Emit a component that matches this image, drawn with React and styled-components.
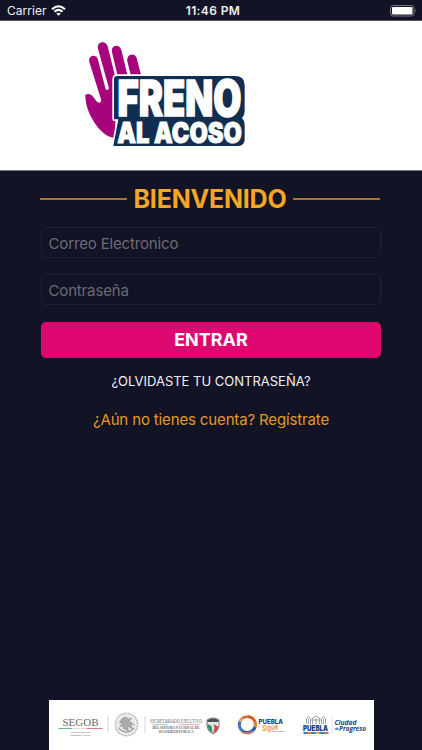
import React from "react";
import styled, { createGlobalStyle } from "styled-components";

const GlobalStyle = createGlobalStyle`
  * {
    box-sizing: border-box;
  }
  body {
    margin: 0;
    background: #131326;
    font-family: Inter, "Liberation Sans", sans-serif;
  }
`;

const Screen = styled.div`
  display: flex;
  flex-direction: column;
  width: 422px;
  height: 750px;
  overflow: hidden;
  background: #131326;
`;

const StatusBar = styled.div`
  display: grid;
  grid-template-columns: 1fr auto 1fr;
  align-items: center;
  height: 20px;
  flex: none;
  padding: 1px 5px 0 7px;
  color: #f1f1f5;
  font-size: 12px;
`;

const Carrier = styled.div`
  display: flex;
  align-items: center;
  gap: 4px;
  letter-spacing: 0.05px;
`;

const Clock = styled.div`
  font-weight: 600;
  letter-spacing: 0.4px;
  padding-left: 2px;
`;

const Battery = styled.svg`
  justify-self: end;
`;

const Header = styled.header`
  display: flex;
  flex: none;
  height: 151px;
  padding: 14px 0 0 80px;
  background: #fff;
  border-top: 1px solid #55556a;
  border-bottom: 1px solid #6f7c85;
`;

const Form = styled.main`
  display: flex;
  flex-direction: column;
  align-items: center;
  flex: 1;
  padding: 13px 41px 0;
`;

const Title = styled.h1`
  display: flex;
  align-items: center;
  align-self: stretch;
  gap: 6px;
  height: 30px;
  margin: 0 1px 13px -1px;
  color: #f6a623;
  font-size: 25px;
  font-weight: 700;
  letter-spacing: -0.2px;
  line-height: 30px;

  &::before,
  &::after {
    content: "";
    flex: 1;
    height: 2px;
    margin-top: -1px;
    background: #a8762a;
  }
`;

const Input = styled.input`
  width: 340px;
  height: 31px;
  margin-bottom: ${(props) => props.$gap};
  padding: 1px 6.5px 0;
  border: 1px solid #20203c;
  border-radius: 5px;
  background: transparent;
  color: #fff;
  font-family: inherit;
  font-size: 15px;
  letter-spacing: -0.15px;

  &::placeholder {
    color: #6b6b73;
    opacity: 1;
  }
`;

const Button = styled.button`
  width: 340px;
  height: 36px;
  padding: 0 0 1px;
  border: 0;
  border-radius: 5px;
  background: #de066f;
  color: #fff;
  font-family: inherit;
  font-size: 18px;
  font-weight: 700;
`;

const Link = styled.a`
  margin-top: ${(props) => props.$top};
  color: ${(props) => props.$color};
  font-size: ${(props) => props.$size};
  letter-spacing: ${(props) => props.$spacing || "0"};
  line-height: 20px;
  white-space: nowrap;
`;

const Footer = styled.footer`
  flex: none;
  width: 325px;
  height: 50px;
  margin-left: 48.5px;
  background: #fff;
`;

function Wifi() {
  return (
    <svg width="15" height="11" viewBox="0 0 15 11">
      <g fill="none" stroke="#fff" strokeWidth="2.1">
        <path d="M1 4.2Q7.5 -1.7 14 4.2" />
        <path d="M3.4 6.8Q7.5 3.1 11.6 6.8" />
      </g>
      <path d="M5.2 8.5Q7.5 6.8 9.8 8.5L7.5 10.8Z" fill="#fff" />
    </svg>
  );
}

function Logo() {
  const plate =
    "M118 126H470Q500 126 500 154V232Q500 244 492 252Q500 260 500 272V316Q500 336 480 336H106L121 256H108V136Q108 126 118 126Z";
  return (
    <svg width="170" height="118" viewBox="80 35 170 118">
      <g transform="translate(78 34) scale(.33333)">
        {/* hand */}
        <g fill="#a6037c">
          <path d="M22 187C20 179 33 178 40 183C48 189 52 200 59 205C65 209 71 204 69 196L34 84C29 64 55 58 60 77L82 162C85 172 94 169 92 160L60 44C55 23 83 17 89 37L112 130V313C85 309 65 290 50 267C34 242 23 218 22 187Z" />
          <path d="M102 54C98 33 124 28 130 48L149 126H119Z" />
          <path d="M148 82C144 61 170 53 176 72L190 126H159Z" />
        </g>
        {/* plate behind the name */}
        <path d={plate} fill="#fff" stroke="#fff" strokeWidth="10" strokeLinejoin="round" />
        <path d={plate} fill="#112d50" />
      </g>
      <g fill="#fff" stroke="#fff" fontFamily="Inter, sans-serif" fontWeight="900">
        <text x="117.6" y="115.7" fontSize="49" strokeWidth="1.5" textLength="123.8" lengthAdjust="spacingAndGlyphs">FRENO</text>
        <text x="117.2" y="143.1" fontSize="28" strokeWidth=".9" textLength="124.6" lengthAdjust="spacingAndGlyphs">AL ACOSO</text>
      </g>
    </svg>
  );
}

function Sponsors() {
  return (
    <svg width="325" height="50" viewBox="48.5 700 325 50">
      {/* Segob */}
      <text x="62" y="726" fontSize="10.5" fill="#66666a" fontFamily="Liberation Serif, serif" textLength="36" lengthAdjust="spacingAndGlyphs">SEGOB</text>
      <path d="M58 728.5H72" stroke="#6fb394" />
      <path d="M72 728.5H86" stroke="#ddd" />
      <path d="M86 728.5H102" stroke="#df7b86" />
      <g fontFamily="Liberation Serif, serif" fill="#66666a" fontSize="2.9" fontWeight="700">
        <text x="70" y="733" textLength="20" lengthAdjust="spacingAndGlyphs">SECRETARÍA DE</text>
        <text x="70" y="736.3" textLength="20" lengthAdjust="spacingAndGlyphs">GOBERNACIÓN</text>
      </g>
      <path d="M107.5 715V733M144.5 716V733" stroke="#c9c9cc" strokeWidth=".8" />

      {/* national seal */}
      <circle cx="126" cy="724.5" r="11" fill="none" stroke="#b3b3b3" strokeWidth="2" strokeDasharray="1 .6" />
      <circle cx="126" cy="724.5" r="8.7" fill="#efefef" stroke="#c6c6c6" strokeWidth=".6" />
      <path d="M119 723C121 717 125 716 128 719L131 718L129 721L134 725L130 724L132 729L127 726L128 731L122 728L124 725L119 727L122 723Z" fill="#aaa" stroke="#8f8f8f" strokeWidth=".6" />
      <path d="M118 728Q126 736 134 728" fill="none" stroke="#a5a5a5" strokeWidth="1.3" />

      {/* Secretariado */}
      <g fontFamily="Liberation Serif, serif" fill="#66666a">
        <text x="149.5" y="723.3" fontSize="5.3" textLength="52" lengthAdjust="spacingAndGlyphs">SECRETARIADO EJECUTIVO</text>
        <text x="152" y="728.5" fontSize="3.4" fontWeight="700" textLength="47" lengthAdjust="spacingAndGlyphs">DEL SISTEMA NACIONAL DE</text>
        <text x="158" y="732.8" fontSize="3.6" fontWeight="700" textLength="35" lengthAdjust="spacingAndGlyphs">SEGURIDAD PÚBLICA</text>
      </g>
      <path d="M152 724.7H167" stroke="#6fb394" strokeWidth=".7" />
      <path d="M178 724.7H199" stroke="#df7b86" strokeWidth=".7" />
      <path d="M206.5 720Q212.5 716 218.5 720V726Q218.5 731 212.5 734Q206.5 731 206.5 726Z" fill="#e3e7e5" stroke="#65696b" strokeWidth=".9" />
      <path d="M207 720Q212.5 717 218 720V722H207Z" fill="#4d5356" />
      <path d="M207 724L211 726L212 733Q207 730 207 725Z" fill="#25966a" />
      <path d="M213 724L218 727Q217 731 212.5 733.5L214 728Z" fill="#d64351" />

      {/* Puebla Sigue */}
      <g fill="none" strokeWidth="3.2">
        <path d="M247 716.5A8 8 0 0 1 254.5 727" stroke="#e87930" />
        <path d="M254.5 727A8 8 0 0 1 242 731" stroke="#285ca8" />
        <path d="M242 731A8 8 0 0 1 239.5 721.5" stroke="#3977b9" />
        <path d="M239.5 721.5A8 8 0 0 1 247 716.5" stroke="#d89b60" />
        <path d="M241 732A10 10 0 0 0 252 731" stroke="#ef8534" strokeWidth="1.5" />
        <path d="M243 718Q250 715 255 721" stroke="#b72c3b" strokeWidth="1" />
      </g>
      <text x="258" y="724" fontSize="6.5" fontWeight="800" fill="#183d78" textLength="24.5" lengthAdjust="spacingAndGlyphs">PUEBLA</text>
      <text x="262" y="731.2" fontSize="8" fontStyle="italic" fontWeight="600" fill="#ee8b37" textLength="16" lengthAdjust="spacingAndGlyphs" transform="rotate(-7 262 731)">Sigue</text>
      <path d="M271 731.5H284" stroke="#7a91b5" strokeWidth=".8" strokeDasharray="1.2 .4" />

      {/* Puebla, Ciudad de Progreso */}
      <g fill="none" stroke="#999ca3" strokeWidth=".9">
        <path d="M306 724V719L308 716.5L310 719V724M321 724V719L323 716.5L325 719V724M310 724V720H321V724" />
        <path d="M312 724V718L315.5 716L319 718V724M308 719V724M315.5 718V724M323 719V724" />
      </g>
      <text x="302.5" y="731.2" fontSize="7.4" fontWeight="900" fill="#183d78" textLength="25" lengthAdjust="spacingAndGlyphs">PUEBLA</text>
      <path d="M303 733H328" stroke="#2377ae" strokeWidth="1.8" />
      <path d="M307 733H311M324 733H327" stroke="#ee7935" strokeWidth="1.8" />
      <path d="M315 733H319" stroke="#e3bd4a" strokeWidth="1.8" />
      <path d="M331.5 716V734" stroke="#ccd0d8" strokeWidth=".6" />
      <g fill="#254578" fontStyle="italic" fontWeight="700" fontFamily="Open Sans, sans-serif">
        <text x="334" y="724.8" fontSize="6.5" textLength="22" lengthAdjust="spacingAndGlyphs">Ciudad</text>
        <text x="334.5" y="729.5" fontSize="3">de</text>
        <text x="338.5" y="731.2" fontSize="6.2" textLength="27" lengthAdjust="spacingAndGlyphs">Progreso</text>
      </g>
    </svg>
  );
}

function App() {
  return (
    <Screen>
      <GlobalStyle />
      <StatusBar>
        <Carrier>
          Carrier
          <Wifi />
        </Carrier>
        <Clock>11:46 PM</Clock>
        <Battery width="27" height="12" viewBox="0 0 27 12">
          <rect x=".5" y=".5" width="23.5" height="10.5" rx="2.5" fill="none" stroke="#747482" />
          <rect x="2" y="2" width="20.5" height="7.5" rx="1" fill="#fff" />
          <path d="M25.2 4Q26.8 5.7 25.2 7.5Z" fill="#747482" />
        </Battery>
      </StatusBar>
      <Header>
        <Logo />
      </Header>
      <Form>
        <Title>BIENVENIDO</Title>
        <Input $gap="16px" placeholder="Correo Electronico" />
        <Input $gap="17px" type="password" placeholder="Contraseña" />
        <Button>ENTRAR</Button>
        <Link $top="13px" $color="#f1f1f5" $size="13px">
          ¿OLVIDASTE TU CONTRASEÑA?
        </Link>
        <Link $top="19px" $color="#e39a25" $size="15px" $spacing="-0.14px">
          ¿Aún no tienes cuenta? Regístrate
        </Link>
      </Form>
      <Footer>
        <Sponsors />
      </Footer>
    </Screen>
  );
}

export default App;
